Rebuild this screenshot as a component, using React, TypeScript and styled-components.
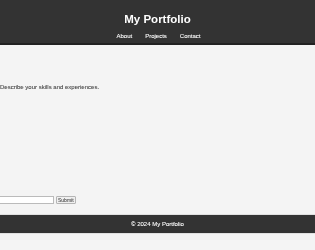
import styled, {createGlobalStyle} from "styled-components";

const GlobalStyle = createGlobalStyle`
  html, body {
    margin: 0;
    padding: 0;
    background: #f4f4f4;
    font-family: "Liberation Sans", Arial, sans-serif;
  }
`

const Page = styled.div`
  width: 315px;
  height: 250px;
  display: flex;
  flex-direction: column;
  background: #f4f4f4;
  overflow: hidden;
  will-change: transform;
`

const Header = styled.header`
  height: 45px;
  background: #333333;
  border-bottom: 2px solid #222222;
  color: #ffffff;
  display: flex;
  flex-direction: column;
  align-items: center;
  box-sizing: border-box;
  padding-top: 12px;
`

const Title = styled.h1`
  margin: 0;
  font-size: 11.5px;
  line-height: 14px;
  font-weight: bold;
`

const Nav = styled.nav`
  display: flex;
  gap: 13px;
  margin-top: 6px;
  padding-left: 2px;
`

const NavLink = styled.a`
  color: #ffffff;
  font-size: 6px;
  line-height: 8px;
  text-decoration: none;
  -webkit-text-stroke: 0.08px #ffffff;
`

const Main = styled.main`
  height: 169px;
  display: flex;
  flex-direction: column;
  padding-top: 38px;
  box-sizing: border-box;
`

const Description = styled.p`
  margin: 0;
  font-size: 6px;
  line-height: 8px;
  color: #444444;
  -webkit-text-stroke: 0.08px #444444;
`

const ContactForm = styled.form`
  margin-top: auto;
  margin-bottom: 10px;
  display: flex;
  align-items: center;
  gap: 2px;
`

const TextInput = styled.input`
  width: 62px;
  height: 6px;
  margin: 0 0 0 -10px;
  padding: 0;
  border: 1px solid #bbbbbb;
  background: #ffffff;
  font-size: 5px;
  box-sizing: content-box;
`

const SubmitButton = styled.button`
  height: 8px;
  padding: 0 1px;
  margin: 0;
  font-family: "Liberation Sans", Arial, sans-serif;
  font-size: 5px;
  line-height: 6px;
  color: #444444;
  background: #f0f0f0;
  border: 1px solid #b5b5b5;
  border-radius: 1px;
  -webkit-text-stroke: 0.06px #444444;
`

const Footer = styled.footer`
  height: 18px;
  background: #333333;
  border-top: 1px solid #e0e0e0;
  border-bottom: 1px solid #e0e0e0;
  color: #ffffff;
  display: flex;
  align-items: center;
  justify-content: center;
  font-size: 6px;
  -webkit-text-stroke: 0.08px #ffffff;
`

const App = () => {
    return (
        <>
            <GlobalStyle/>
            <Page>
                <Header>
                    <Title>My Portfolio</Title>
                    <Nav>
                        <NavLink href="#about">About</NavLink>
                        <NavLink href="#projects">Projects</NavLink>
                        <NavLink href="#contact">Contact</NavLink>
                    </Nav>
                </Header>
                <Main>
                    <Description>Describe your skills and experiences.</Description>
                    <ContactForm onSubmit={(e) => e.preventDefault()}>
                        <TextInput type="text"/>
                        <SubmitButton type="submit">Submit</SubmitButton>
                    </ContactForm>
                </Main>
                <Footer>© 2024 My Portfolio</Footer>
            </Page>
        </>
    )
}

export default App;
